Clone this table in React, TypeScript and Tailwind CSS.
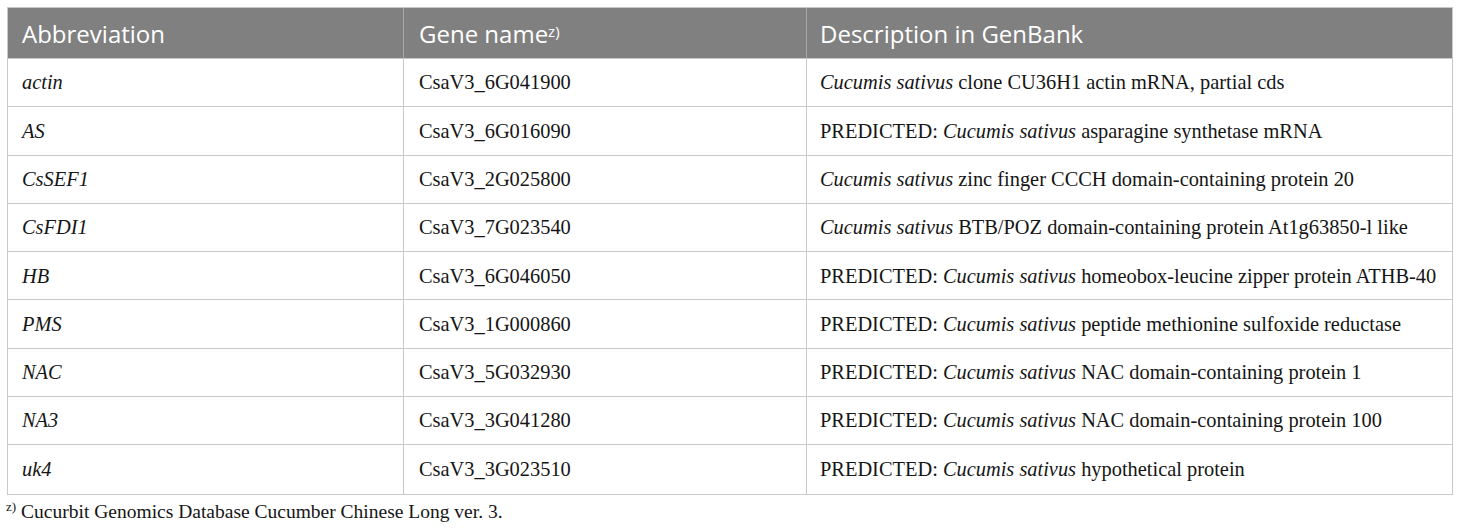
import React from "react";

type Row = { abbr: string; gene: string; pre?: boolean; sp: string; rest: string };

const rows: Row[] = [
  { abbr: "actin", gene: "CsaV3_6G041900", sp: "Cucumis sativus", rest: " clone CU36H1 actin mRNA, partial cds" },
  { abbr: "AS", gene: "CsaV3_6G016090", pre: true, sp: "Cucumis sativus", rest: " asparagine synthetase mRNA" },
  { abbr: "CsSEF1", gene: "CsaV3_2G025800", sp: "Cucumis sativus", rest: " zinc finger CCCH domain-containing protein 20" },
  { abbr: "CsFDI1", gene: "CsaV3_7G023540", sp: "Cucumis sativus", rest: " BTB/POZ domain-containing protein At1g63850-l like" },
  { abbr: "HB", gene: "CsaV3_6G046050", pre: true, sp: "Cucumis sativus", rest: " homeobox-leucine zipper protein ATHB-40" },
  { abbr: "PMS", gene: "CsaV3_1G000860", pre: true, sp: "Cucumis sativus", rest: " peptide methionine sulfoxide reductase" },
  { abbr: "NAC", gene: "CsaV3_5G032930", pre: true, sp: "Cucumis sativus", rest: " NAC domain-containing protein 1" },
  { abbr: "NA3", gene: "CsaV3_3G041280", pre: true, sp: "Cucumis sativus", rest: " NAC domain-containing protein 100" },
  { abbr: "uk4", gene: "CsaV3_3G023510", pre: true, sp: "Cucumis sativus", rest: " hypothetical protein" },
];

const serif = { fontFamily: '"Liberation Serif", "DejaVu Serif", serif' };
const sans = { fontFamily: '"Open Sans", "Noto Sans", sans-serif' };

export default function App() {
  return (
    <div className="w-[1460px] h-[531px] bg-white pt-[7px] pl-[7px]">
      <div className="w-[1446px] border border-[#c9c9c9]">
        <div className="flex h-[51px] bg-[#808080] text-white text-[24px] border-b border-[#c9c9c9]" style={sans}>
          <div className="w-[396px] flex items-center pl-[14px] pt-[1px] border-r border-[#a8a8a8]">Abbreviation</div>
          <div className="w-[403px] flex items-center pl-[15px] pt-[1px] border-r border-[#a8a8a8]">
            Gene name<sup className="text-[15px] relative -top-[3px]">z)</sup>
          </div>
          <div className="flex-1 flex items-center pl-[13px] pt-[1px]">Description in GenBank</div>
        </div>
        {rows.map((r, i) => (
          <div
            key={r.abbr}
            className={`flex h-[48.3px] text-[20.4px] text-[#151515] ${i < rows.length - 1 ? "border-b border-[#c9c9c9]" : ""}`}
            style={serif}
          >
            <div className="w-[396px] flex items-center pl-[14px] border-r border-[#c9c9c9] italic">{r.abbr}</div>
            <div className="w-[403px] flex items-center pl-[15px] border-r border-[#c9c9c9]">{r.gene}</div>
            <div className="flex-1 flex items-center pl-[13px] whitespace-pre">
              {r.pre ? "PREDICTED: " : ""}
              <i>{r.sp}</i>
              {r.rest}
            </div>
          </div>
        ))}
      </div>
      <div className="mt-[2px] -ml-[1px] text-[19.5px] text-[#151515] flex items-baseline" style={serif}>
        <sup className="text-[13px] mr-[5px]">z)</sup>
        <span>Cucurbit Genomics Database Cucumber Chinese Long ver. 3.</span>
      </div>
    </div>
  );
}
